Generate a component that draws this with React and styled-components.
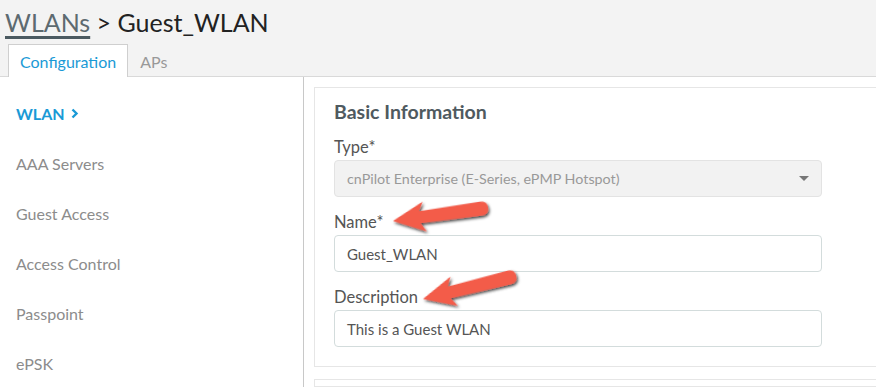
import React from 'react';
import styled, { createGlobalStyle } from 'styled-components';

const GlobalStyle = createGlobalStyle`
	html, body {
		margin: 0;
		padding: 0;
		background: #fff;
		font-family: Lato, "Open Sans", sans-serif;
		overflow: hidden;
	}
`;

const Page = styled.div`
	position: relative;
	width: 876px;
	height: 387px;
	overflow: hidden;
`;

const Header = styled.header`
	background: #f3f3f3;
	border-bottom: 1px solid #d9d9d9;
	height: 76px;
	display: flex;
	flex-direction: column;
	justify-content: space-between;
`;

const Title = styled.h1`
	margin: 0;
	padding: 6px 0 0 5px;
	font-size: 25px;
	font-weight: 400;
	line-height: 32px;
	color: #222;

	a {
		color: #5d6a70;
		text-decoration: underline;
		text-decoration-thickness: 3px;
		text-decoration-color: #4b5a61;
		text-underline-offset: 4px;
	}
`;

const Tabs = styled.div`
	display: flex;
	align-items: flex-end;
	padding-left: 8px;
	margin-bottom: -1px;
`;

const Tab = styled.div`
	height: 32px;
	display: flex;
	align-items: center;
	padding: 0 11px;
	font-size: 16px;
	color: ${(p) => (p.active ? '#1a9ad6' : '#999')};
	background: ${(p) => (p.active ? '#fff' : 'transparent')};
	border: 1px solid ${(p) => (p.active ? '#cfcfcf' : 'transparent')};
	border-bottom: none;
`;

const Body = styled.div`
	display: flex;
	height: 310px;
`;

const Sidebar = styled.nav`
	width: 304px;
	flex-shrink: 0;
	border-right: 1px solid #c8c8c8;
	padding-top: 11px;
	box-sizing: border-box;
`;

const NavItem = styled.div`
	height: 50px;
	display: flex;
	align-items: center;
	gap: 6px;
	padding-left: 16px;
	font-size: 16px;
	color: ${(p) => (p.active ? '#1a9ad6' : '#8c8c8c')};
	font-weight: ${(p) => (p.active ? 700 : 400)};
`;

const Content = styled.main`
	flex: 1;
	padding: 10px 0 0 10px;
	display: flex;
	flex-direction: column;
	gap: 12px;
`;

const Panel = styled.section`
	border: 1px solid #e6e6e6;
	border-right: none;
	padding: 12px 0 19px 19px;
`;

const PanelStub = styled.section`
	border: 1px solid #e6e6e6;
	border-right: none;
	height: 40px;
`;

const Heading = styled.h2`
	margin: 0 0 13px;
	font-size: 19.5px;
	line-height: 24px;
	font-weight: 700;
	color: #4f5a60;
`;

const Field = styled.div`
	width: 488px;
	& + & {
		margin-top: 15px;
	}
`;

const Label = styled.label`
	display: block;
	font-size: 16.5px;
	line-height: 20px;
	color: #555;
	margin-bottom: 3px;
`;

const Input = styled.div`
	height: 37px;
	box-sizing: border-box;
	border: 1px solid ${(p) => (p.disabled ? '#e3e3e3' : '#d3dcdc')};
	border-radius: 4px;
	display: flex;
	align-items: center;
	justify-content: space-between;
	padding: 0 12px;
	font-size: ${(p) => (p.disabled ? '14.3px' : '15px')};
	color: ${(p) => (p.disabled ? '#999' : '#555')};
	background: ${(p) => (p.disabled ? '#f2f2f2' : '#fff')};
`;

const Caret = styled.span`
	width: 0;
	height: 0;
	border-left: 5px solid transparent;
	border-right: 5px solid transparent;
	border-top: 5px solid #777;
`;

const Overlay = styled.svg`
	position: absolute;
	left: 0;
	top: 0;
	pointer-events: none;
`;

const arrowShape = 'M0 0 L32 -15 L27 -6 L89 -7 Q96 -7 96 0 Q96 7 89 7 L27 6 L32 15 Z';

const Arrow = ({ x, y, angle }) => (
	<path
		d={arrowShape}
		transform={`translate(${x} ${y}) rotate(${angle})`}
		fill="#f35b4a"
		filter="url(#shadow)"
	/>
);

const navItems = ['AAA Servers', 'Guest Access', 'Access Control', 'Passpoint', 'ePSK'];

const App = () => {
	return (
		<Page>
			<GlobalStyle />
			<Header>
				<Title>
					<a>WLANs</a> &gt; Guest_WLAN
				</Title>
				<Tabs>
					<Tab active>Configuration</Tab>
					<Tab>APs</Tab>
				</Tabs>
			</Header>
			<Body>
				<Sidebar>
					<NavItem active>
						WLAN
						<svg width="8" height="11" viewBox="0 0 8 11">
							<path d="M1.5 1.5 L5.5 5.5 L1.5 9.5" fill="none" stroke="#1a9ad6" strokeWidth="2.4" />
						</svg>
					</NavItem>
					{navItems.map((item) => (
						<NavItem key={item}>{item}</NavItem>
					))}
				</Sidebar>
				<Content>
					<Panel>
						<Heading>Basic Information</Heading>
						<Field>
							<Label>Type*</Label>
							<Input disabled>
								<span>cnPilot Enterprise (E-Series, ePMP Hotspot)</span>
								<Caret />
							</Input>
						</Field>
						<Field>
							<Label>Name*</Label>
							<Input>Guest_WLAN</Input>
						</Field>
						<Field>
							<Label>Description</Label>
							<Input>This is a Guest WLAN</Input>
						</Field>
					</Panel>
					<PanelStub />
				</Content>
			</Body>
			<Overlay width="876" height="387" viewBox="0 0 876 387">
				<defs>
					<filter id="shadow" x="-20%" y="-50%" width="140%" height="200%">
						<feDropShadow dx="1" dy="2" stdDeviation="1.5" floodColor="#000" floodOpacity="0.75" />
					</filter>
				</defs>
				<Arrow x={393} y={221} angle={-8} />
				<Arrow x={423} y={299} angle={-14} />
			</Overlay>
		</Page>
	);
};

export default App;
